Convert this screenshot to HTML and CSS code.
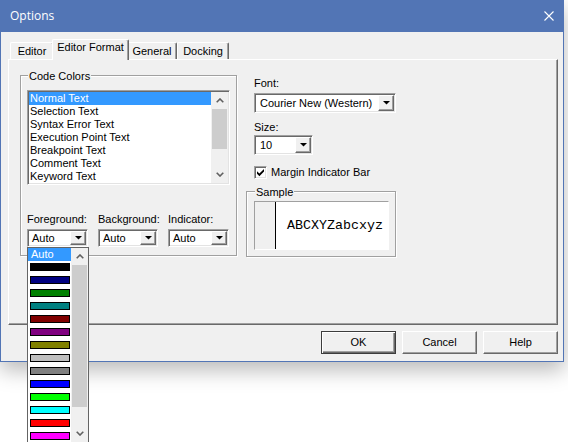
FILE: index.html
```html
<!DOCTYPE html>
<html lang="en">
<head>
<meta charset="utf-8">
<title>Options</title>
<link rel="stylesheet" href="styles.css">
</head>
<body>
<div class="window">
  <div class="titlebar">
    <span class="title">Options</span>
    <svg class="close" width="10" height="10" viewBox="0 0 10 10"><path d="M0.5 0.5 L9.5 9.5 M9.5 0.5 L0.5 9.5" stroke="#fff" stroke-width="1.1" fill="none"/></svg>
  </div>
  <div class="client">
    <div class="tabs">
      <div class="tab tab-editor">Editor</div>
      <div class="tab tab-format active">Editor Format</div>
      <div class="tab tab-general">General</div>
      <div class="tab tab-docking">Docking</div>
    </div>
    <div class="panel">
      <div class="group code-colors">
        <span class="caption">Code Colors</span>
        <div class="listbox">
          <ul class="items">
            <li class="selected">Normal Text</li>
            <li>Selection Text</li>
            <li>Syntax Error Text</li>
            <li>Execution Point Text</li>
            <li>Breakpoint Text</li>
            <li>Comment Text</li>
            <li>Keyword Text</li>
          </ul>
          <div class="vscroll">
            <span class="sb-arrow"><svg width="8" height="5" viewBox="0 0 8 5"><path d="M0.7 4.3 L4 1 L7.3 4.3" fill="none" stroke="#606060" stroke-width="1.6"/></svg></span>
            <span class="sb-thumb list-thumb"></span>
            <span class="sb-track"></span>
            <span class="sb-arrow"><svg width="8" height="5" viewBox="0 0 8 5"><path d="M0.7 0.7 L4 4 L7.3 0.7" fill="none" stroke="#606060" stroke-width="1.6"/></svg></span>
          </div>
        </div>
        <div class="pickers">
          <div class="picker picker-fg">
            <span class="label">Foreground:</span>
            <div class="combo color-combo">
              <span class="value">Auto</span>
              <span class="drop-btn"><svg width="7" height="4" viewBox="0 0 7 4"><path d="M0 0 H7 L3.5 3.5 Z" fill="#000"/></svg></span>
            </div>
            <div class="dropdown">
              <ul class="color-list">
                <li class="selected">Auto</li>
                <li><span class="swatch" style="background:#000000"></span></li>
                <li><span class="swatch" style="background:#000080"></span></li>
                <li><span class="swatch" style="background:#008000"></span></li>
                <li><span class="swatch" style="background:#008080"></span></li>
                <li><span class="swatch" style="background:#800000"></span></li>
                <li><span class="swatch" style="background:#800080"></span></li>
                <li><span class="swatch" style="background:#808000"></span></li>
                <li><span class="swatch" style="background:#c0c0c0"></span></li>
                <li><span class="swatch" style="background:#808080"></span></li>
                <li><span class="swatch" style="background:#0000ff"></span></li>
                <li><span class="swatch" style="background:#00ff00"></span></li>
                <li><span class="swatch" style="background:#00ffff"></span></li>
                <li><span class="swatch" style="background:#ff0000"></span></li>
                <li><span class="swatch" style="background:#ff00ff"></span></li>
              </ul>
              <div class="vscroll">
                <span class="sb-arrow"><svg width="8" height="5" viewBox="0 0 8 5"><path d="M0.7 4.3 L4 1 L7.3 4.3" fill="none" stroke="#606060" stroke-width="1.6"/></svg></span>
                <span class="sb-thumb drop-thumb"></span>
                <span class="sb-track"></span>
                <span class="sb-arrow"><svg width="8" height="5" viewBox="0 0 8 5"><path d="M0.7 0.7 L4 4 L7.3 0.7" fill="none" stroke="#606060" stroke-width="1.6"/></svg></span>
              </div>
            </div>
          </div>
          <div class="picker picker-bg">
            <span class="label">Background:</span>
            <div class="combo color-combo">
              <span class="value">Auto</span>
              <span class="drop-btn"><svg width="7" height="4" viewBox="0 0 7 4"><path d="M0 0 H7 L3.5 3.5 Z" fill="#000"/></svg></span>
            </div>
          </div>
          <div class="picker picker-ind">
            <span class="label">Indicator:</span>
            <div class="combo color-combo">
              <span class="value">Auto</span>
              <span class="drop-btn"><svg width="7" height="4" viewBox="0 0 7 4"><path d="M0 0 H7 L3.5 3.5 Z" fill="#000"/></svg></span>
            </div>
          </div>
        </div>
      </div>

      <div class="format-side">
        <div class="font-settings">
          <span class="label">Font:</span>
          <div class="combo font-combo">
            <span class="value">Courier New (Western)</span>
            <span class="drop-btn"><svg width="7" height="4" viewBox="0 0 7 4"><path d="M0 0 H7 L3.5 3.5 Z" fill="#000"/></svg></span>
          </div>
          <span class="label size-label">Size:</span>
          <div class="combo size-combo">
            <span class="value">10</span>
            <span class="drop-btn"><svg width="7" height="4" viewBox="0 0 7 4"><path d="M0 0 H7 L3.5 3.5 Z" fill="#000"/></svg></span>
          </div>
          <label class="check-row">
            <span class="checkbox"><svg width="9" height="9" viewBox="0 0 9 9"><path d="M1 3.2 L3.4 5.6 L8 1 V3.6 L3.4 8.2 L1 5.8 Z" fill="#000"/></svg></span>
            <span>Margin Indicator Bar</span>
          </label>
        </div>
        <div class="group sample">
          <span class="caption">Sample</span>
          <div class="sample-box">
            <span class="sample-margin"></span>
            <span class="sample-text">ABCXYZabcxyz</span>
          </div>
        </div>
      </div>
    </div>
    <div class="buttons">
      <button class="btn default">OK</button>
      <button class="btn">Cancel</button>
      <button class="btn">Help</button>
    </div>
  </div>
</div>
</body>
</html>
```

FILE: styles.css
```css
* { box-sizing: border-box; }

html, body {
  margin: 0;
  background: #fff;
}

body {
  width: 568px;
  height: 442px;
  overflow: hidden;
  font: 11px/13px "Liberation Sans", Arial, sans-serif;
  color: #000;
}

/* ---- window frame ---- */
.window {
  position: relative;
  width: 564px;
  height: 362px;
  display: flex;
  flex-direction: column;
  border: 1px solid #5275b5;
  border-top: 0;
  background: #f0f0f0;
  box-shadow: 0 8px 20px rgba(0, 0, 0, 0.28);
}

.titlebar {
  height: 32px;
  flex: none;
  display: flex;
  align-items: center;
  justify-content: space-between;
  padding: 0 9px 0 9px;
  background: #5275b5;
  color: #fff;
}

.title {
  font: 12px/16px "Open Sans", "Noto Sans", sans-serif;
  padding-bottom: 1px;
}

.close { display: block; }

.client {
  flex: 1;
  padding: 7px 5px 0 7px;
}

/* ---- tab strip ---- */
.tabs {
  display: flex;
  align-items: flex-end;
  height: 20px;
  padding-left: 2px;
}

.tab {
  height: 17px;
  padding-top: 2px;
  text-align: center;
  border: 1px solid #fff;
  border-right-color: #696969;
  border-bottom: 0;
  border-radius: 2px 2px 0 0;
  box-shadow: inset -1px 0 0 #a0a0a0;
  background: #f0f0f0;
  white-space: nowrap;
}

.tab-editor { width: 44px; }
.tab-format { width: 77px; }
.tab-general { width: 50px; }
.tab-docking { width: 52px; }

.tab.active {
  position: relative;
  z-index: 1;
  height: 21px;
  margin: 0 -2px -1px;
  padding-top: 1px;
}

/* ---- page panel ---- */
.panel {
  width: 550px;
  height: 266px;
  display: flex;
  align-items: flex-start;
  gap: 9px;
  padding: 15px 0 0 11px;
  border: 1px solid #fff;
  border-right-color: #696969;
  border-bottom-color: #696969;
  box-shadow: inset -1px -1px 0 #a0a0a0;
}

/* group boxes */
.group {
  border: 1px solid #a0a0a0;
  box-shadow: inset 1px 1px 0 #fff, 1px 1px 0 #fff;
}

.caption {
  display: block;
  width: fit-content;
  margin: -6px 0 0 1px;
  padding: 0 1px;
  background: #f0f0f0;
}

.code-colors {
  width: 217px;
  padding: 0 6px 8px 6px;
}

/* list box */
.listbox {
  display: flex;
  width: 203px;
  height: 95px;
  margin-top: 7px;
  padding: 1px;
  background: #fff;
  border: 1px solid;
  border-color: #a0a0a0 #fff #fff #a0a0a0;
  box-shadow: inset 1px 1px 0 #696969, inset -1px -1px 0 #e3e3e3;
}

.items {
  flex: 1;
  margin: 0;
  padding: 0;
  list-style: none;
}

.items li {
  height: 13px;
  padding-left: 1px;
  white-space: nowrap;
}

.items li.selected,
.color-list li.selected {
  background: #3399ff;
  color: #fff;
}

/* scroll bars */
.vscroll {
  width: 17px;
  flex: none;
  display: flex;
  flex-direction: column;
  background: #f0f0f0;
}

.sb-arrow {
  height: 17px;
  flex: none;
  display: flex;
  align-items: center;
  justify-content: center;
}

.sb-thumb {
  flex: none;
  margin: 0 1px;
  background: #cdcdcd;
}

.list-thumb { height: 40px; }
.drop-thumb { height: 142px; }

.sb-track { flex: 1; }

/* colour pickers */
.pickers {
  display: flex;
  gap: 10px;
  margin-top: 28px;
}

.picker {
  position: relative;
  display: flex;
  flex-direction: column;
}

.picker-fg, .picker-ind { width: 61px; }
.picker-bg { width: 60px; }

.label {
  display: block;
  white-space: nowrap;
}

/* combo boxes */
.combo {
  display: flex;
  margin-top: 3px;
  padding: 1px;
  background: #fff;
  border: 1px solid;
  border-color: #a0a0a0 #fff #fff #a0a0a0;
  box-shadow: inset 1px 1px 0 #696969, inset -1px -1px 0 #e3e3e3;
}

.color-combo { height: 18px; }

.combo .value {
  flex: 1;
  padding-left: 3px;
  line-height: 14px;
  white-space: nowrap;
  overflow: hidden;
}

.font-combo .value,
.size-combo .value {
  padding-left: 4px;
  line-height: 16px;
}

.drop-btn {
  width: 16px;
  flex: none;
  display: flex;
  align-items: center;
  justify-content: center;
  background: #f0f0f0;
  border: 1px solid;
  border-color: #fff #696969 #696969 #fff;
  box-shadow: inset -1px -1px 0 #a0a0a0;
}

.drop-btn svg { display: block; }

/* open colour list, running off the bottom of the screen */
.dropdown {
  position: absolute;
  left: 0;
  top: 100%;
  z-index: 10;
  width: 62px;
  height: 195px;
  display: flex;
  background: #fff;
  border: 1px solid #646464;
  border-bottom: 0;
}

.color-list {
  flex: 1;
  margin: 0;
  padding: 0;
  list-style: none;
}

.color-list li {
  height: 13px;
  padding: 2px 0 0 2px;
}

.color-list li.selected {
  padding: 0 0 0 3px;
}

.swatch {
  display: block;
  width: 40px;
  height: 8px;
  border: 1px solid #000;
}

/* right side */
.format-side {
  width: 150px;
  padding-top: 2px;
}

.font-settings {
  padding-left: 8px;
}

.font-combo {
  width: 142px;
  height: 20px;
}

.size-label { margin-top: 8px; }

.size-combo {
  width: 59px;
  height: 20px;
  margin-top: 1px;
}

.check-row {
  display: flex;
  align-items: center;
  gap: 4px;
  height: 13px;
  margin-top: 11px;
}

.checkbox {
  width: 13px;
  height: 13px;
  padding: 1px;
  background: #fff;
  border: 1px solid;
  border-color: #a0a0a0 #fff #fff #a0a0a0;
  box-shadow: inset 1px 1px 0 #696969, inset -1px -1px 0 #e3e3e3;
}

.checkbox svg { display: block; }

.sample {
  margin-top: 12px;
  padding: 0 6px 6px 7px;
}

.sample-box {
  display: flex;
  align-items: center;
  height: 49px;
  margin-top: 2px;
  background: #fff;
  border: 1px solid;
  border-color: #a0a0a0 #fff #fff #a0a0a0;
}

.sample-margin {
  align-self: stretch;
  width: 21px;
  background: #f0f0f0;
  border-right: 1px solid #000;
}

.sample-text {
  padding-left: 11px;
  font: 13.33px/16px "Liberation Mono", "Courier New", monospace;
}

/* dialog buttons */
.buttons {
  display: flex;
  justify-content: flex-end;
  gap: 6px;
  width: 550px;
  margin-top: 6px;
}

.btn {
  width: 75px;
  height: 23px;
  padding: 0;
  font: inherit;
  color: #000;
  background: #f0f0f0;
  border: 1px solid;
  border-color: #fff #696969 #696969 #fff;
  box-shadow: inset -1px -1px 0 #a0a0a0;
}

.btn.default {
  border-color: #3c3c3c;
  box-shadow: inset 1px 1px 0 #fff, inset -1px -1px 0 #696969, inset -2px -2px 0 #a0a0a0;
}
```
